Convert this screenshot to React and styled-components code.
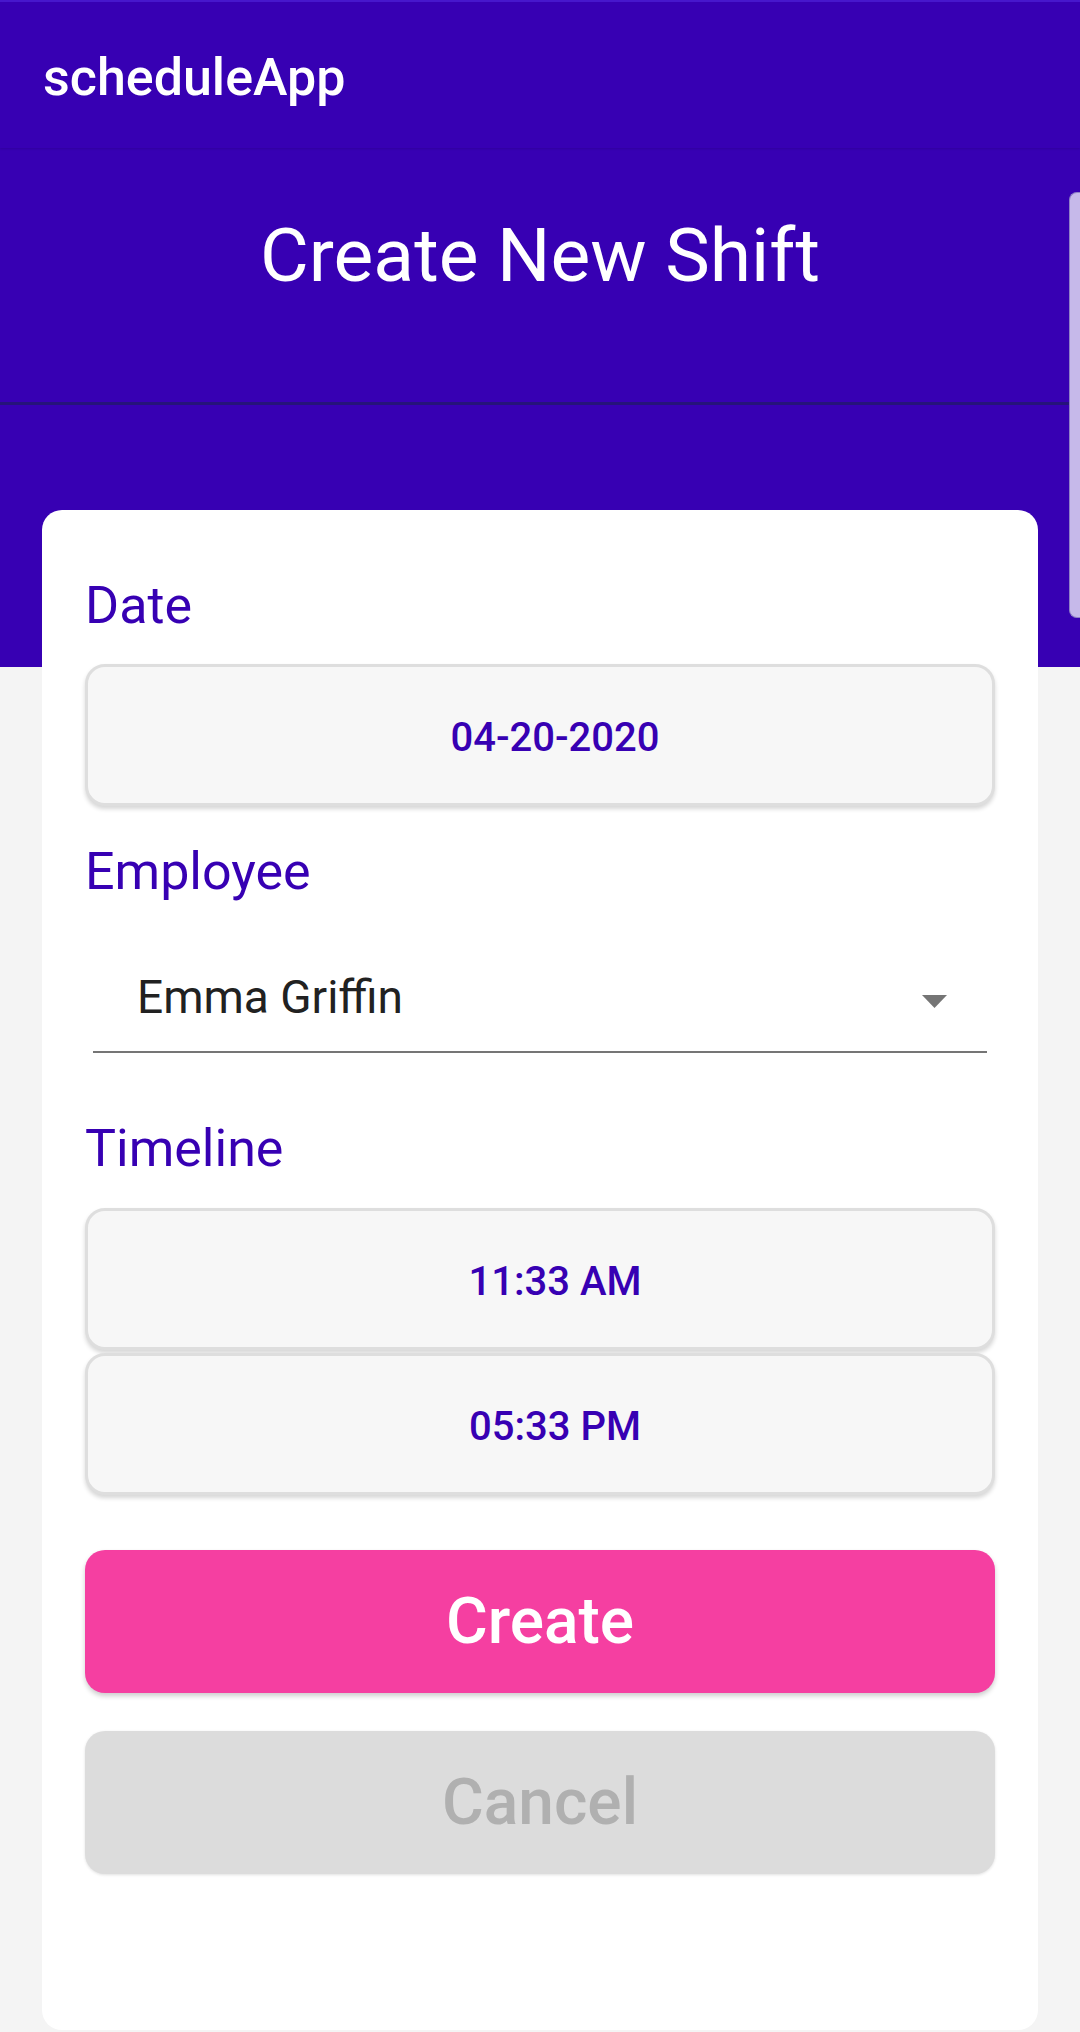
import React, { useState } from 'react';
import styled, { createGlobalStyle } from 'styled-components';

const GlobalStyle = createGlobalStyle`
  html, body {
    margin: 0;
    padding: 0;
    background: #f4f4f4;
    font-family: Roboto, 'Noto Sans', 'Liberation Sans', sans-serif;
  }
  * {
    box-sizing: border-box;
  }
`;

const Page = styled.div`
  position: relative;
  min-height: 2032px;
  overflow: hidden;
  background: linear-gradient(to bottom, #3700b3 0, #3700b3 667px, #f4f4f4 667px);
`;

const AppBar = styled.header`
  height: 148px;
  display: flex;
  align-items: center;
  padding: 4px 0 0 43px;
  border-top: 2px solid #4717cc;
  background: #3700b3;
  box-shadow: 0 1px 2px rgba(0, 0, 0, 0.12);
  color: #ffffff;
  font-size: 52px;
  font-weight: 500;
`;

const TitleBar = styled.div`
  height: 257px;
  padding-top: 69px;
  border-bottom: 3px solid #26137a;
  text-align: center;
`;

const Title = styled.h1`
  margin: 0;
  font-size: 75px;
  line-height: 76px;
  font-weight: 400;
  color: #ffffff;
`;

const Card = styled.main`
  margin: 105px 42px 0;
  min-height: 1520px;
  padding: 66px 43px 40px;
  border-radius: 20px;
  background: #ffffff;
`;

const Label = styled.div`
  margin-top: ${(p) => p.$top || 0}px;
  font-size: 52px;
  line-height: 60px;
  color: #3700b3;
`;

const PickerField = styled.div`
  height: 142px;
  margin-top: ${(p) => p.$top || 0}px;
  display: flex;
  align-items: center;
  justify-content: center;
  padding: 4px 0 0 30px;
  border: 3px solid #dedede;
  border-radius: 20px;
  background: #f7f7f7;
  box-shadow: 0 3px 4px rgba(0, 0, 0, 0.16);
  color: #3700b3;
  font-size: 40px;
  font-weight: 500;
`;

const Select = styled.div`
  position: relative;
  margin: 40px 8px 0;
  padding: 28px 0 27px 44px;
  border-bottom: 2px solid #757575;
  font-size: 46px;
  line-height: 54px;
  color: #212121;
`;

const Arrow = styled.svg`
  position: absolute;
  right: 40px;
  top: 53px;
  width: 25px;
  height: 13px;
`;

const ActionButton = styled.button`
  display: block;
  width: 100%;
  height: 143px;
  margin-top: ${(p) => p.$top}px;
  border: none;
  border-radius: 20px;
  background: ${(p) => (p.$primary ? '#f53fa1' : '#dcdcdc')};
  box-shadow: ${(p) => (p.$primary ? '0 3px 5px rgba(0, 0, 0, 0.2)' : '0 1px 3px rgba(0, 0, 0, 0.12)')};
  color: ${(p) => (p.$primary ? '#ffffff' : '#b0b0b0')};
  font-family: inherit;
  font-size: 64px;
  font-weight: 500;
`;

const ScrollThumb = styled.div`
  position: absolute;
  right: 0;
  top: 192px;
  width: 11px;
  height: 426px;
  border: 1px solid #8f80c6;
  border-right: none;
  border-radius: 8px 0 0 8px;
  background: #c6b9ea;
`;

export default function App() {
  const [employee] = useState('Emma Griffin');

  return (
    <Page>
      <GlobalStyle />
      <AppBar>scheduleApp</AppBar>
      <TitleBar>
        <Title>Create New Shift</Title>
      </TitleBar>
      <Card>
        <Label>Date</Label>
        <PickerField $top={28}>04-20-2020</PickerField>

        <Label $top={36}>Employee</Label>
        <Select>
          {employee}
          <Arrow viewBox="0 0 25 13">
            <path d="M0 0 L25 0 L12.5 13 Z" fill="#757575" />
          </Arrow>
        </Select>

        <Label $top={66}>Timeline</Label>
        <PickerField $top={29}>11:33 AM</PickerField>
        <PickerField $top={3}>05:33 PM</PickerField>

        <ActionButton $primary $top={55}>Create</ActionButton>
        <ActionButton $top={38}>Cancel</ActionButton>
      </Card>
      <ScrollThumb />
    </Page>
  );
}
